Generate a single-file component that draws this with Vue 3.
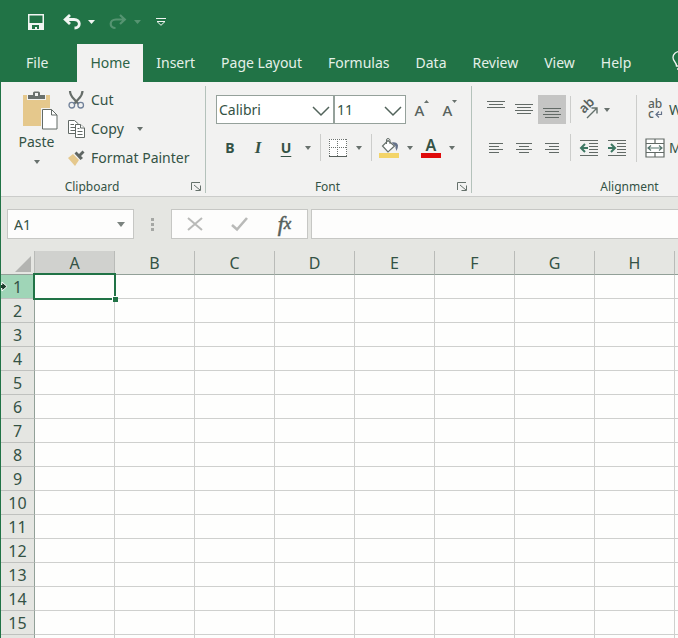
<script setup>
import { ref } from 'vue'

const tabs = ['File', 'Home', 'Insert', 'Page Layout', 'Formulas', 'Data', 'Review', 'View', 'Help']
const columns = ['A', 'B', 'C', 'D', 'E', 'F', 'G', 'H', 'I']
const activeTab = ref('Home')
const font = ref('Calibri')
const size = ref('11')
const cell = ref('A1')
const formula = ref('')
</script>

<template>
  <div class="app">
    <header class="top">
      <div class="quick">
        <button class="q save" aria-label="Save">
          <svg width="16" height="16" viewBox="0 0 16 16"><path d="M.75.75h14.5v14.5H3L.75 13z" fill="none" stroke="#f1f5f2" stroke-width="1.5" /><path d="M0 9h16v7H0z" fill="#f1f5f2" /><path d="M4 11h7v4H9v-2H7v2H4z" fill="#217346" /></svg>
        </button>
        <button class="q" aria-label="Undo">
          <svg width="18" height="16" viewBox="0 0 18 16"><path d="M2 5.500h9c7 0 7 8.500.5 8.500M7 1 2.200 5.500 7 10" fill="none" stroke="#f1f5f2" stroke-width="2.800" /></svg>
        </button>
        <button class="q arrow" aria-label="Undo list"><svg width="7" height="4" viewBox="0 0 7 4"><path d="M0 0h7L3.500 4z" fill="#f1f5f2" /></svg></button>
        <button class="q faded" aria-label="Redo">
          <svg width="18" height="16" viewBox="0 0 18 16"><path d="M16 5.500H7c-7 0-7 8.500-.5 8.500M11 1l4.800 4.500L11 10" fill="none" stroke="#f1f5f2" stroke-width="2.200" /></svg>
        </button>
        <button class="q arrow faded" aria-label="Redo list"><svg width="7" height="4" viewBox="0 0 7 4"><path d="M0 0h7L3.500 4z" fill="#f1f5f2" /></svg></button>
        <button class="q custom" aria-label="Customize toolbar">
          <svg width="10" height="8" viewBox="0 0 10 8"><path d="M0 .5h10M1 3.500h8L5 7.300z" fill="none" stroke="#f1f5f2" /></svg>
        </button>
      </div>
      <nav class="tabs">
        <button v-for="t in tabs" :key="t" class="tab" :class="{ active: t === activeTab, file: t === 'File' }" @click="activeTab = t">{{ t }}</button>
        <button class="tab bulb" aria-label="Tell me">
          <svg width="15" height="22" viewBox="0 0 15 22"><path d="M4.500 15c0-4-3.500-4.500-3.500-8.500a6.500 6 0 0 1 13 0c0 4-3.500 4.500-3.500 8.500zM5 18h5M6 20.500h3" fill="none" stroke="#f1f5f2" stroke-width="1.300" /></svg>
        </button>
      </nav>
    </header>

    <div class="window">
      <div class="ribbon">
        <section class="group clipboard">
          <div class="body">
            <button class="paste">
              <svg width="36" height="40" viewBox="0 0 36 40">
                <rect y="4" width="27" height="31" fill="#e5c88c" />
                <path d="M4 3.500h5V0h9v3.500h5V9H4z" fill="#f2f2f1" />
                <path d="M5 4h5V2q0-1.500 1.500-1.500h4Q17 .5 17 2v2h5v4H5z" fill="#69706d" /><rect x="12" y="2" width="3" height="3" fill="#f2f2f1" />
                <path d="M18 17h12l5.500 6v17H18z" fill="#f2f2f1" />
                <path d="M19.500 18.500h9l5.500 5.500v14H19.500z" fill="#fff" stroke="#626a66" /><path d="M28.500 18.500V24H34" fill="none" stroke="#626a66" />
              </svg>
              <span>Paste</span>
              <svg class="caret" width="6" height="4" viewBox="0 0 6 4"><path d="M0 0h6L3 4z" /></svg>
            </button>
            <div class="commands">
              <button class="command">
                <svg width="17" height="18" viewBox="0 0 17 18"><path d="M2 0q0 4 4 8l4.500 5M14.500 0q0 4-4 8L6 13" fill="none" stroke="#666d69" stroke-width="2.200" /><circle cx="3.800" cy="14.200" r="2.800" fill="none" stroke="#72829a" stroke-width="1.300" /><circle cx="12.700" cy="14.200" r="2.800" fill="none" stroke="#72829a" stroke-width="1.300" /></svg>
                Cut
              </button>
              <button class="command">
                <svg width="17" height="18" viewBox="0 0 17 18"><g fill="#fff" stroke="#626a66"><path d="M.5.500h6L10.500 4v9.500H.5z" /><path d="M2.500 4.500H6m-3.500 3H7m-4.500 3H7" /><path d="M7.500 4.500h5l4 3.500v9.500h-9z" /><path d="M12.500 4.500V8h4M9.500 8.500h2m-2 3h5m-5 3h5" /></g></svg>
                Copy
                <svg class="caret copycaret" width="6" height="4" viewBox="0 0 6 4"><path d="M0 0h6L3 4z" /></svg>
              </button>
              <button class="command">
                <svg width="17" height="16" viewBox="0 0 17 16"><path d="m0 8 5-4 6 6-4 6z" fill="#e5c88c" /><path d="m6.500 3.500 2-2 2.500 2.500L14.500.500 16.500 2.500 13 6l2 2-2.500 2z" fill="#5f6663" /></svg>
                Format Painter
              </button>
            </div>
          </div>
          <footer>
            <span>Clipboard</span>
            <button class="launch" aria-label="Clipboard options"><svg width="10" height="9" viewBox="0 0 10 9"><path d="M.5 8V.5H9M3 3l6 5M9.500 3.500v5h-5" fill="none" stroke="#65716b" /></svg></button>
          </footer>
        </section>

        <section class="group font">
          <div class="body rows">
            <div class="row">
              <label class="pick face">
                <select v-model="font" aria-label="Font"><option>Calibri</option></select>
                <svg width="18" height="10" viewBox="0 0 18 10"><path d="m1 1 8 8 8-8" /></svg>
              </label>
              <label class="pick size">
                <select v-model="size" aria-label="Font size"><option>11</option></select>
                <svg width="18" height="10" viewBox="0 0 18 10"><path d="m1 1 8 8 8-8" /></svg>
              </label>
              <button class="tool grow" aria-label="Increase font size">A<svg width="5" height="3" viewBox="0 0 5 3"><path d="M0 3h5L2.500 0z" /></svg></button>
              <button class="tool grow" aria-label="Decrease font size">A<svg width="5" height="3" viewBox="0 0 5 3"><path d="M0 0h5L2.500 3z" /></svg></button>
            </div>
            <div class="row">
              <button class="tool bold">B</button>
              <button class="tool italic">I</button>
              <button class="tool under">U</button>
              <button class="drop" aria-label="Underline styles"><svg class="caret" width="6" height="4" viewBox="0 0 6 4"><path d="M0 0h6L3 4z" /></svg></button>
              <i class="sep"></i>
              <button class="tool color" aria-label="Borders">
                <svg width="18" height="18" viewBox="0 0 18 18"><path d="M0 0h18v18H0z" fill="#fff" /><path d="M0 .5h18M0 8.500h18M.5 0v17M8.500 0v17M17.500 0v17" stroke="#6d7370" stroke-dasharray="1 1" /><path d="M0 17.500h18" stroke="#555d59" /></svg>
              </button>
              <button class="drop" aria-label="Border styles"><svg class="caret" width="6" height="4" viewBox="0 0 6 4"><path d="M0 0h6L3 4z" /></svg></button>
              <i class="sep"></i>
              <button class="tool color" aria-label="Fill color">
                <svg width="20" height="20" viewBox="0 0 20 20"><path d="M0 15h20v5H0z" fill="#f3d468" /><path d="m9 2.500 6.500 5.500L9 14 3.500 8z" fill="#fff" stroke="#66706b" stroke-width="1.200" /><path d="M7.500 6V2q0-1.500 1.500-1.500T11 2v4" fill="none" stroke="#66706b" /><path d="M12.500 4.500q5.500-1 6.500 3 0 3-1.500 5.500Q16 10 16.500 8z" fill="#65728a" /></svg>
              </button>
              <button class="drop" aria-label="Fill colors"><svg class="caret" width="6" height="4" viewBox="0 0 6 4"><path d="M0 0h6L3 4z" /></svg></button>
              <button class="tool color ink" aria-label="Font color"><span>A</span></button>
              <button class="drop" aria-label="Font colors"><svg class="caret" width="6" height="4" viewBox="0 0 6 4"><path d="M0 0h6L3 4z" /></svg></button>
            </div>
          </div>
          <footer>
            <span>Font</span>
            <button class="launch" aria-label="Font options"><svg width="10" height="9" viewBox="0 0 10 9"><path d="M.5 8V.5H9M3 3l6 5M9.500 3.500v5h-5" fill="none" stroke="#65716b" /></svg></button>
          </footer>
        </section>

        <section class="group align">
          <div class="body">
            <div class="rows">
              <div class="row">
                <button class="tool" aria-label="Top align"><svg class="lines" width="18" height="18" viewBox="0 0 18 18"><path d="M0 .5h18M2 3.500h14M0 6.500h18" /></svg></button>
                <button class="tool" aria-label="Middle align"><svg class="lines" width="18" height="18" viewBox="0 0 18 18"><path d="M0 3.500h18M2 6.500h14M0 9.500h18M2 12.500h14" /></svg></button>
                <button class="tool on" aria-label="Bottom align"><svg class="lines" width="18" height="18" viewBox="0 0 18 18"><path d="M0 7.500h18M2 10.500h14M0 13.500h18M2 16.500h14" /></svg></button>
                <i class="sep"></i>
                <button class="tool turn" aria-label="Orientation">
                  <svg width="20" height="20" viewBox="0 0 20 20"><text x="0" y="0" transform="translate(5 14) rotate(-45)" font-size="13" font-weight="600" fill="#59625e">ab</text><path d="m8 18 9.500-9.500M12.500 8H18v5.500" fill="none" stroke="#64716c" stroke-width="1.400" /></svg>
                </button>
                <button class="drop turn-list" aria-label="Orientation list"><svg class="caret" width="6" height="4" viewBox="0 0 6 4"><path d="M0 0h6L3 4z" /></svg></button>
              </div>
              <div class="row">
                <button class="tool" aria-label="Align left"><svg class="lines" width="16" height="10" viewBox="0 0 16 10"><path d="M1 .5h14M1 3.500h10M1 6.500h14M1 9.500h10" /></svg></button>
                <button class="tool" aria-label="Center"><svg class="lines" width="16" height="10" viewBox="0 0 16 10"><path d="M0 .5h16M3 3.500h10M0 6.500h16M3 9.500h10" /></svg></button>
                <button class="tool" aria-label="Align right"><svg class="lines" width="16" height="10" viewBox="0 0 16 10"><path d="M1 .5h14M5 3.500h10M1 6.500h14M5 9.500h10" /></svg></button>
                <i class="sep"></i>
                <button class="tool" aria-label="Decrease indent"><svg class="lines" width="18" height="16" viewBox="0 0 18 16"><path d="M0 .5h18M9 3.500h9M9 6.500h9M9 9.500h9M9 12.500h9M0 15.500h18" /><path class="move" d="M8 8H2M5 4 1 8l4 4" /></svg></button>
                <button class="tool" aria-label="Increase indent"><svg class="lines" width="18" height="16" viewBox="0 0 18 16"><path d="M0 .5h18M9 3.500h9M9 6.500h9M9 9.500h9M9 12.500h9M0 15.500h18" /><path class="move" d="M0 8h6M3 4l4 4-4 4" /></svg></button>
              </div>
            </div>
            <i class="sep tall"></i>
            <div class="rows wraps">
              <div class="row">
                <button class="command wide">
                  <svg width="20" height="20" viewBox="0 0 20 20"><g font-size="12" font-weight="500" fill="#59625e"><text x="3" y="8">ab</text><text x="3" y="18">c</text></g><path d="M16.500 11.500v3H11m3-3-3 3 3 3" fill="none" stroke="#64728a" stroke-width="1.200" /></svg>
                  Wrap Text
                </button>
              </div>
              <div class="row">
                <button class="command wide">
                  <svg width="20" height="20" viewBox="0 0 20 20"><path d="M1 1h18v18H1zM1 5.500h18M1 14.500h18M10 1v4.500m0 9V19" fill="#fff" stroke="#626a66" stroke-width="1.200" /><path d="M3 10h14M6 7.500 3 10l3 2.500m8-5 3 2.500-3 2.500" fill="none" stroke="#57766e" stroke-width="1.200" /></svg>
                  Merge &amp; Center
                </button>
              </div>
            </div>
          </div>
          <footer><span>Alignment</span></footer>
        </section>
      </div>

      <div class="formula-bar">
        <div class="name-box">
          <input v-model="cell" aria-label="Name box" />
          <button class="drop" aria-label="Named cells"><svg width="8" height="5" viewBox="0 0 8 5"><path d="M0 0h8L4 5z" fill="#7b837f" /></svg></button>
        </div>
        <span class="dots"><i></i><i></i><i></i></span>
        <div class="entry">
          <button aria-label="Cancel"><svg width="16" height="14" viewBox="0 0 16 14"><path d="m1 1 14 12M15 1 1 13" fill="none" stroke="#b9bab8" stroke-width="2" /></svg></button>
          <button aria-label="Enter"><svg width="17" height="14" viewBox="0 0 17 14"><path d="m1 8 5 4.500L16 1" fill="none" stroke="#b9bab8" stroke-width="2.600" /></svg></button>
          <button class="fx" aria-label="Insert function"><em>f</em><em class="x">x</em></button>
        </div>
        <input v-model="formula" class="formula" aria-label="Formula" />
      </div>

      <div class="sheet">
        <table>
          <thead>
            <tr>
              <th class="corner"><svg width="16" height="16" viewBox="0 0 16 16"><path d="M16 0v16H0z" fill="#b3b4b1" /></svg></th>
              <th v-for="c in columns" :key="c" scope="col" :class="{ chosen: c === 'A' }">{{ c }}</th>
            </tr>
          </thead>
          <tbody>
            <tr v-for="r in 16" :key="r">
              <th scope="row" :class="{ current: r === 1 }">
                {{ r }}
                <svg v-if="r === 1" class="pointer" width="8" height="11" viewBox="0 0 8 11"><path d="M-1 3.500h3V1l5 4.500L2 10V7.500h-3z" fill="#1f3d2e" stroke="#fff" /></svg>
              </th>
              <td v-for="c in columns" :key="c"><div v-if="r === 1 && c === 'A'" class="selection"><i></i></div></td>
            </tr>
          </tbody>
        </table>
      </div>
    </div>
  </div>
</template>

<style>
body { margin: 0; overflow: hidden; }
</style>

<style scoped>
* { box-sizing: border-box; }
.app { display: flex; flex-direction: column; height: 100vh; overflow: hidden; font-family: "Noto Sans", "Open Sans", sans-serif; font-size: 14px; color: #345245; background: #e5e6e2; }
button, input, select { font: inherit; color: inherit; border: 0; background: none; padding: 0; margin: 0; border-radius: 0; outline: 0; }
svg { display: block; flex: none; overflow: visible; }
i { font-style: normal; }
.top { background: #217346; color: #e4f0e8; flex: none; overflow: hidden; }
.quick { height: 44px; display: flex; align-items: center; padding-left: 28px; }
.save { margin-right: 19px; }
.arrow { margin: 0 14px 0 7px; }
.custom { margin-left: 1px; }
.faded { opacity: .25; }
.tabs { display: flex; height: 38px; }
.tab { flex: none; padding: 0 13px 2px; white-space: nowrap; }
.file { padding-left: 26px; padding-right: 29px; }
.active { background: #f2f2f1; color: #2c6346; }
.bulb { padding-left: 28px; padding-right: 0; }
.window { flex: 1; min-height: 0; display: flex; flex-direction: column; border-left: 1px solid #217346; overflow: hidden; }
.ribbon { display: flex; height: 115px; flex: none; background: #f2f2f1; border-bottom: 1px solid #cbccca; padding: 4px 0 3px; overflow: hidden; }
.group { flex: none; display: flex; flex-direction: column; justify-content: space-between; border-right: 1px solid #b4c2bb; }
.clipboard { width: 205px; }
.font { width: 266px; }
.align { width: 316px; }
.body { display: flex; }
footer { display: flex; justify-content: center; position: relative; height: 14px; line-height: 16px; font-size: 12px; }
.clipboard footer { padding-right: 22px; }
.font footer { padding-right: 22px; }
.launch { position: absolute; right: 4px; bottom: 2px; }
.caret { fill: #68716d; }
.paste { display: flex; flex-direction: column; align-items: center; width: 65px; padding: 5px 0 0 14px; line-height: 20px; }
.paste span { margin: 1px 0 8px -8px; }
.paste .caret { margin-left: -8px; }
.commands { display: flex; flex-direction: column; margin-top: -1px; }
.command { display: flex; align-items: center; gap: 6px; height: 29px; padding: 0 0 0 2px; white-space: nowrap; }
.copycaret { margin-left: 7px; }
.rows { display: flex; flex-direction: column; gap: 9px; padding-top: 9px; }
.font .rows { padding-left: 10px; }
.align .rows { padding-left: 10px; }
.align .wraps { padding-left: 8px; }
.row { display: flex; align-items: center; height: 29px; }
.pick { position: relative; height: 29px; border: 1px solid #95a19b; background: #fff; }
.pick select { appearance: none; width: 100%; height: 27px; padding-left: 2px; }
.pick svg { position: absolute; right: 3px; top: 10px; pointer-events: none; }
.pick path { fill: none; stroke: #52635b; stroke-width: 1.500; }
.face { width: 118px; }
.size { width: 72px; margin-right: 2px; }
.tool { display: flex; align-items: center; justify-content: center; width: 28px; height: 29px; flex: none; }
.grow { color: #59635e; font-size: 15px; font-weight: 500; }
.grow svg { align-self: flex-start; margin-top: 5px; fill: #68716d; }
.drop { display: flex; justify-content: center; align-items: center; width: 16px; height: 27px; flex: none; }
.bold, .under { font-weight: 700; }
.under { text-decoration: underline; text-underline-offset: 3px; }
.italic { font-family: "Liberation Serif", serif; font-size: 17px; font-style: italic; font-weight: 700; }
.color { width: 26px; }
.turn-list { width: 8px; }
.ink span { width: 20px; height: 20px; line-height: 14px; font-size: 16px; font-weight: 600; border-bottom: 5px solid #df0b0b; }
.sep { width: 1px; height: 27px; background: #cccdcb; margin: 0 4px; flex: none; }
.tall { height: 67px; margin: 9px 0 0 5px; }
.on { background: #c5c5c4; }
.lines { fill: none; stroke: #626a66; }
.move { stroke: #3d7763; stroke-width: 2; }
.align .wide { gap: 4px; padding: 0; }
.formula-bar { display: flex; flex: none; height: 54px; padding: 12px 0 12px 6px; }
.name-box { display: flex; width: 127px; border: 1px solid #c6c7c4; background: #fdfdfc; }
.name-box input { flex: 1; min-width: 0; padding-left: 6px; }
.name-box .drop { width: 24px; height: 28px; }
.dots { display: flex; flex-direction: column; justify-content: center; align-items: center; gap: 2px; width: 37px; }
.dots i { width: 3px; height: 3px; background: #a5a7a4; }
.entry { display: flex; width: 137px; border: 1px solid #c6c7c4; background: #fdfdfc; }
.entry button { flex: 1; display: flex; align-items: center; justify-content: center; }
.entry .fx { font-family: "Liberation Serif", serif; font-size: 22px; color: #56605b; line-height: 24px; -webkit-text-stroke: 0.5px #56605b; }
.x { font-size: 17px; }
.formula { flex: 1; min-width: 0; margin-left: 3px; border: 1px solid #c6c7c4; border-right: 0; background: #fdfdfc; }
.sheet { flex: 1; min-height: 0; overflow: hidden; }
table { border-collapse: separate; border-spacing: 0; table-layout: fixed; width: 754px; }
th, td { width: 80px; height: 24px; padding: 0; font-weight: 400; font-size: 16px; line-height: 22px; border-right: 1px solid #cfd0ce; border-bottom: 1px solid #cfd0ce; }
td { background: #fefefd; }
thead th { border-bottom-color: #92a098; border-right-color: #b9bbb8; }
th.chosen { background: #d0d1ce; }
.corner, tbody th { width: 34px; }
tbody th { position: relative; border-right-color: #92a098; border-bottom-color: #bfc1be; }
.corner svg { margin: 2px 0 0 14px; }
th.current { background: #9fd5b7; }
.pointer { position: absolute; left: -1px; top: 6px; }
.selection { position: relative; z-index: 2; height: 27px; margin: -2px; border: 2px solid #217346; }
.selection i { position: absolute; right: -4px; bottom: -4px; width: 6px; height: 6px; background: #217346; border: solid #fff; border-width: 1px 0 0 1px; }
</style>
